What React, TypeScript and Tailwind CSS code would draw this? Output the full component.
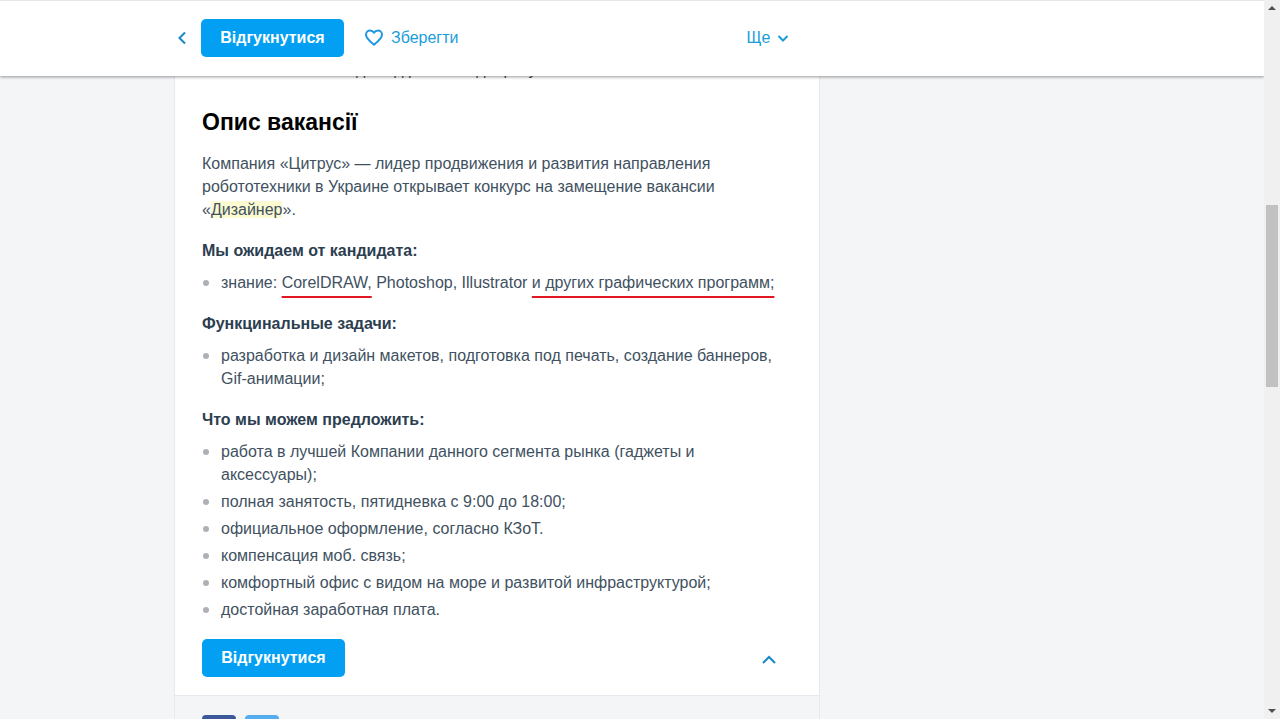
import type { ReactNode } from "react";

function Chevron({ points, className }: { points: string; className: string }) {
  return (
    <svg
      viewBox="0 0 14 14"
      fill="none"
      stroke="currentColor"
      strokeWidth="2"
      className={className}
      aria-hidden="true"
    >
      <polyline points={points} />
    </svg>
  );
}

function ApplyButton() {
  return (
    <button
      type="button"
      className="h-[38px] w-[143px] rounded-[5px] bg-[#029ff2] text-base leading-5 font-bold text-white"
    >
      Відгукнутися
    </button>
  );
}

function Section({ title, children }: { title: string; children: ReactNode }) {
  return (
    <section className="mt-[18px]">
      <h3 className="font-bold text-[#2c3e50]">{title}</h3>
      <ul className="mt-[9px] flex flex-col gap-1">{children}</ul>
    </section>
  );
}

function Item({ children }: { children: ReactNode }) {
  return (
    <li className="flex gap-3">
      <span className="mt-[9px] ml-px size-1.5 shrink-0 rounded-full bg-[#adb1b5]" />
      <span>{children}</span>
    </li>
  );
}

function Marked({ children }: { children: ReactNode }) {
  return (
    <span className="underline decoration-[#e01822] decoration-2 underline-offset-8 [text-decoration-skip-ink:none]">
      {children}
    </span>
  );
}

function Header() {
  return (
    <header className="relative z-10 border-t border-[#e6e6e6] bg-white shadow-[0_1px_3px_rgba(0,0,0,0.4)]">
      <div className="mx-auto flex h-[75px] max-w-[918px] items-center pb-0.5 text-base leading-5 text-[#1b9dd9]">
        <a href="#back" aria-label="Назад" className="w-7 pl-0.5 text-[#1787c9]">
          <Chevron points="10,1.5 4.5,7 10,12.5" className="size-3.5" />
        </a>
        <ApplyButton />
        <button type="button" className="ml-5 flex items-center gap-[7px]">
          <svg
            viewBox="0 0 20 20"
            className="size-5"
            fill="none"
            stroke="#1c98e3"
            strokeWidth="2"
            strokeLinejoin="round"
            aria-hidden="true"
          >
            <path d="M10 16.6C6.5 13.8 2 10.4 2 6.7 2 4.2 3.9 2.5 6.1 2.5 7.7 2.5 9.1 3.3 10 4.6 10.9 3.3 12.3 2.5 13.9 2.5 16.1 2.5 18 4.2 18 6.7 18 10.4 13.5 13.8 10 16.6Z" />
          </svg>
          Зберегти
        </button>
        <button type="button" className="ml-72 flex items-center gap-1.5">
          Ще
          <Chevron points="2.5,5 7,9.5 11.5,5" className="size-3.5" />
        </button>
      </div>
    </header>
  );
}

function Scrollbar() {
  return (
    <aside aria-hidden="true" className="z-20 flex w-4 shrink-0 flex-col items-center bg-[#f0f0f0] py-1.5">
      <svg viewBox="0 0 8 4" className="h-1 w-2" fill="#505050">
        <path d="M0 4 4 0 8 4Z" />
      </svg>
      <div className="flex w-3 flex-1 flex-col">
        <div className="flex-[195]" />
        <div className="flex-[182] bg-[#c1c1c1]" />
        <div className="flex-[322]" />
      </div>
      <svg viewBox="0 0 8 4" className="h-1 w-2" fill="#505050">
        <path d="M0 0 4 4 8 0Z" />
      </svg>
    </aside>
  );
}

export default function App() {
  return (
    <div className="flex h-screen overflow-hidden bg-[#f3f5f7] font-['Liberation_Sans',Arial,sans-serif]">
      <div className="flex min-w-0 flex-1 flex-col">
        <Header />
        <main className="mx-auto w-full max-w-[916px]">
          <article className="max-w-[646px] border-x border-[#e6e9ed] bg-white text-base leading-[23px] text-[#415161]">
            <div className="px-[27px] pb-[18px]">
              <p className="-mt-[18px] pl-[154px]">досвід роботи від 1 року</p>
              <h2 className="mt-[25px] text-[23px] leading-8 font-bold text-black">Опис вакансії</h2>
              <p className="mt-[14px] pr-10">
                Компания «Цитрус» — лидер продвижения и развития направления
                робототехники в Украине открывает конкурс на замещение вакансии «
                <mark className="bg-[#fcfad0] text-inherit">Дизайнер</mark>».
              </p>
              <Section title="Мы ожидаем от кандидата:">
                <Item>
                  знание: <Marked>CorelDRAW,</Marked> Photoshop, Illustrator{" "}
                  <Marked>и других графических программ;</Marked>
                </Item>
              </Section>
              <Section title="Функцинальные задачи:">
                <Item>
                  разработка и дизайн макетов, подготовка под печать, создание баннеров,
                  Gif-анимации;
                </Item>
              </Section>
              <Section title="Что мы можем предложить:">
                <Item>работа в лучшей Компании данного сегмента рынка (гаджеты и аксессуары);</Item>
                <Item>полная занятость, пятидневка с 9:00 до 18:00;</Item>
                <Item>официальное оформление, согласно КЗоТ.</Item>
                <Item>компенсация моб. связь;</Item>
                <Item>комфортный офис с видом на море и развитой инфраструктурой;</Item>
                <Item>достойная заработная плата.</Item>
              </Section>
              <div className="mt-[18px] flex items-center justify-between pr-4">
                <ApplyButton />
                <a href="#top" aria-label="Нагору" className="pt-1 text-[#1787c9]">
                  <Chevron points="1,10 7,4 13,10" className="size-3.5" />
                </a>
              </div>
            </div>
            <footer className="flex gap-[9px] border-t border-[#e6e9ed] bg-[#f3f5f7] px-[27px] pt-[19px]">
              <a href="#facebook" aria-label="Facebook" className="size-[34px] rounded bg-[#3b5998]" />
              <a href="#twitter" aria-label="Twitter" className="size-[34px] rounded bg-[#55acee]" />
            </footer>
          </article>
        </main>
      </div>
      <Scrollbar />
    </div>
  );
}
